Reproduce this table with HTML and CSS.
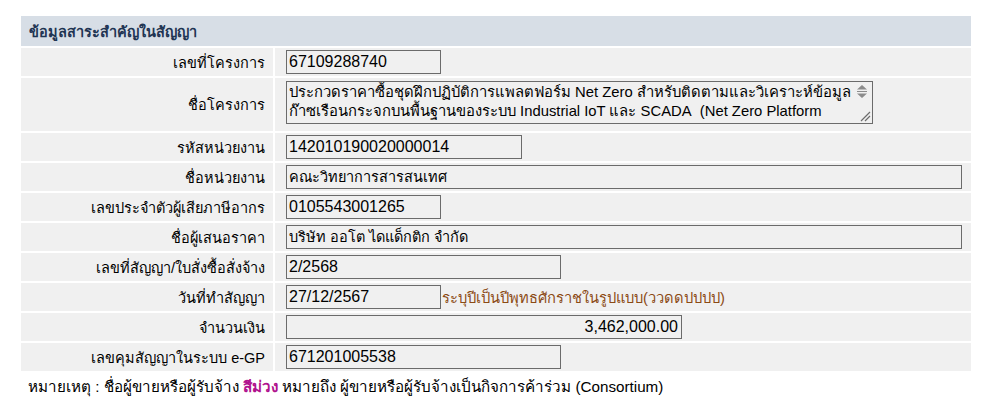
FILE: index.html
```html
<!DOCTYPE html>
<html lang="th">
<head>
<meta charset="utf-8">
<title>ข้อมูลสาระสำคัญในสัญญา</title>
<link rel="stylesheet" href="styles.css">
</head>
<body>
<div class="page">
  <table class="info">
    <tr><th class="head" colspan="2">ข้อมูลสาระสำคัญในสัญญา</th></tr>
    <tr>
      <td class="label">เลขที่โครงการ</td>
      <td class="value"><span class="field w155 digits">67109288740</span></td>
    </tr>
    <tr class="tall">
      <td class="label">ชื่อโครงการ</td>
      <td class="value">
        <div class="area">
          <div class="area-text">ประกวดราคาซื้อชุดฝึกปฏิบัติการแพลตฟอร์ม Net Zero สำหรับติดตามและวิเคราะห์ข้อมูล<br>ก๊าซเรือนกระจกบนพื้นฐานของระบบ Industrial IoT และ SCADA&nbsp; (Net Zero Platform</div>
          <div class="area-bar">
            <svg class="spin" width="20" height="20" viewBox="0 0 20 20">
              <path d="M5 7.5 L10 3 L15 7.5 Z" fill="#8c8c8c"/>
              <path d="M5 9.5 H15" stroke="#8c8c8c" stroke-width="1"/>
              <path d="M5 11.5 L15 11.5 L10 16 Z" fill="#8c8c8c"/>
            </svg>
            <svg class="grip" width="20" height="14" viewBox="0 0 20 14">
              <path d="M9 12 L18 3 M13 12 L18 7" stroke="#6d6d6d" stroke-width="1.2"/>
            </svg>
          </div>
        </div>
      </td>
    </tr>
    <tr>
      <td class="label">รหัสหน่วยงาน</td>
      <td class="value"><span class="field w236 digits">142010190020000014</span></td>
    </tr>
    <tr>
      <td class="label">ชื่อหน่วยงาน</td>
      <td class="value"><span class="field w676">คณะวิทยาการสารสนเทศ</span></td>
    </tr>
    <tr>
      <td class="label">เลขประจำตัวผู้เสียภาษีอากร</td>
      <td class="value"><span class="field w155 digits">0105543001265</span></td>
    </tr>
    <tr>
      <td class="label">ชื่อผู้เสนอราคา</td>
      <td class="value"><span class="field w676">บริษัท ออโต ไดแด็กติก จำกัด</span></td>
    </tr>
    <tr>
      <td class="label">เลขที่สัญญา/ใบสั่งซื้อสั่งจ้าง</td>
      <td class="value"><span class="field w275 digits">2/2568</span></td>
    </tr>
    <tr>
      <td class="label">วันที่ทำสัญญา</td>
      <td class="value"><span class="field w155 digits">27/12/2567</span><span class="hint">ระบุปีเป็นปีพุทธศักราชในรูปแบบ(ววดดปปปป)</span></td>
    </tr>
    <tr>
      <td class="label">จำนวนเงิน</td>
      <td class="value"><span class="field w396 num digits">3,462,000.00</span></td>
    </tr>
    <tr>
      <td class="label">เลขคุมสัญญาในระบบ e-GP</td>
      <td class="value"><span class="field w275 digits">671201005538</span></td>
    </tr>
  </table>
  <p class="note">หมายเหตุ : ชื่อผู้ขายหรือผู้รับจ้าง <b class="purple">สีม่วง</b> หมายถึง ผู้ขายหรือผู้รับจ้างเป็นกิจการค้าร่วม (Consortium)</p>
</div>
</body>
</html>
```
FILE: styles.css
```css
* { box-sizing: border-box; }
html, body { margin: 0; padding: 0; background: #ffffff; }
body {
  font-family: "Liberation Sans", Arial, sans-serif;
  font-size: 14.5px;
  color: #000;
}
.page { padding: 14px 0 0 19px; width: 973px; }
.info {
  border-collapse: separate;
  border-spacing: 2px;
  width: 954px;
}
.head {
  background: #d7dee6;
  color: #1f3553;
  font-weight: bold;
  text-align: left;
  height: 30px;
  padding: 0 0 0 8px;
  font-size: 14.5px;
}
.info td { background: #f0f0f0; height: 28px; padding: 0; vertical-align: middle; }
.label { width: 252px; text-align: right; padding-right: 8px !important; }
.value { padding-left: 11px !important; }
.tall td { height: 53px; }
.field {
  display: inline-block;
  vertical-align: middle;
  height: 24px;
  line-height: 22px;
  border: 1px solid #6b6b6b;
  background: #f0f0f0;
  padding: 0 2px;
  white-space: nowrap;
  overflow: hidden;
}
.digits { font-size: 16px; }
.w155 { width: 155px; }
.w236 { width: 236px; }
.w275 { width: 275px; }
.w396 { width: 396px; }
.w676 { width: 676px; }
.num { text-align: right; padding-right: 3px; }
.hint { color: #8b4a14; vertical-align: middle; margin-left: 1px; font-size: 14.7px; }
.area {
  width: 587px;
  height: 43px;
  border: 1px solid #6b6b6b;
  display: flex;
  background: #f0f0f0;
  margin-top: -4px;
}
.area-text {
  flex: 1;
  padding: 1px 2px 0;
  font-size: 14.8px;
  line-height: 19px;
  white-space: nowrap;
  overflow: hidden;
}
.area-bar {
  width: 20px;
  display: flex;
  flex-direction: column;
  justify-content: space-between;
}
.spin, .grip { display: block; }
.note { margin: 4px 0 0 9px; line-height: 20px; font-size: 15.2px; }
.purple { color: #b0128e; }
```
